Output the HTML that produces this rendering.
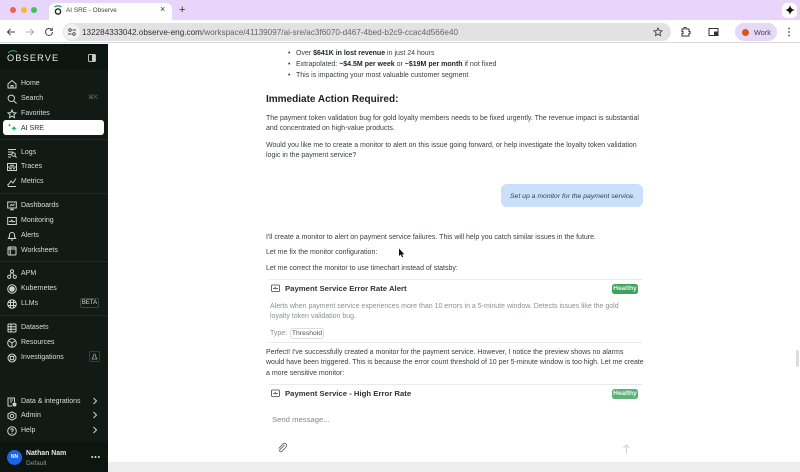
<!DOCTYPE html>
<html><head><meta charset="utf-8"><style>
html,body{margin:0;padding:0;width:800px;height:472px;overflow:hidden;background:#fff}
body{position:relative;font-family:"Liberation Sans",sans-serif;color:#2a2d30}
.a{position:absolute;white-space:nowrap}
.t{position:absolute;white-space:nowrap;font-size:7px;line-height:10px;color:#3a3d40;margin-top:.8px}
.n{position:absolute;left:21px;white-space:nowrap;font-size:7px;line-height:10px;color:#d8dedb;margin-top:1px}
.i{position:absolute;left:7px;width:10px;height:10px;overflow:visible;fill:none;stroke:#cfd6d2;stroke-width:1;margin-top:1px}
b{color:#1e2022}
</style></head><body>
<!-- Chrome top -->
<div class="a" style="left:0;top:0;width:800px;height:20px;background:#e8d5fb"></div>
<div class="a" style="left:0;top:20px;width:800px;height:22px;background:#fff"></div>
<div class="a" style="left:10px;top:6.500px;width:6px;height:6px;border-radius:50%;background:#ee5f5a"></div>
<div class="a" style="left:21px;top:6.500px;width:6px;height:6px;border-radius:50%;background:#f5b83d"></div>
<div class="a" style="left:31px;top:6.500px;width:6px;height:6px;border-radius:50%;background:#3ec554"></div>
<div class="a" style="left:49px;top:3px;width:123px;height:18px;background:#fff;border-radius:6px 6px 0 0"></div>
<svg class="a" style="left:52px;top:4px" width="12" height="12" viewBox="0 0 12 12" fill="none"><path d="M2.500 3Q6 .5 9.500 3" stroke="#1d8f5a" stroke-width="1.200"/><circle cx="6" cy="7.500" r="2.600" stroke="#222" stroke-width="1.400"/></svg>
<div class="a" style="left:66px;top:4.500px;font-size:6.400px;line-height:11px;color:#444">AI SRE - Observe</div>
<div class="a" style="left:160px;top:3px;font-size:9px;line-height:13px;color:#333">×</div>
<div class="a" style="left:179px;top:2.500px;font-size:11px;line-height:15px;color:#333">+</div>
<div class="a" style="left:782px;top:3px;width:15px;height:15px;border-radius:5px;background:#fff"></div>
<svg class="a" style="left:785px;top:5px" width="10" height="10" viewBox="0 0 10 10"><path d="M5 0Q5.600 4.400 10 5Q5.600 5.600 5 10Q4.400 5.600 0 5Q4.400 4.400 5 0Z" fill="#111"/></svg>
<!-- Toolbar -->
<svg class="a" style="left:6px;top:27px" width="10" height="10" viewBox="0 0 10 10" fill="none" stroke="#444" stroke-width="1"><path d="M9 5H1.500M4.500 2 1.500 5l3 3"/></svg>
<svg class="a" style="left:25px;top:27px" width="10" height="10" viewBox="0 0 10 10" fill="none" stroke="#aaa" stroke-width="1"><path d="M1 5h7.500M5.500 2l3 3-3 3"/></svg>
<svg class="a" style="left:44px;top:27px" width="10" height="10" viewBox="0 0 10 10" fill="none" stroke="#444" stroke-width="1"><path d="M8.500 5A3.500 3.500 0 1 1 7.500 2.500M8.300 .8v2.400H5.900"/></svg>
<div class="a" style="left:63px;top:23px;width:608px;height:18px;border-radius:9px;background:#e2e2e4"></div>
<div class="a" style="left:64px;top:24px;width:16px;height:16px;border-radius:50%;background:#f2f2f3"></div>
<svg class="a" style="left:67px;top:27px" width="10" height="10" viewBox="0 0 10 10" fill="none" stroke="#444" stroke-width=".9"><circle cx="3" cy="3" r="1.300"/><path d="M5.500 3H9M1 7h3.500"/><circle cx="7" cy="7" r="1.300"/></svg>
<div class="a" style="left:82px;top:26.500px;font-size:8.180px;line-height:12px;color:#333">132284333042.observe-eng.com<span style="color:#666">/workspace/41139097/ai-sre/ac3f6070-d467-4bed-b2c9-ccac4d566e40</span></div>
<svg class="a" style="left:653px;top:27px" width="10" height="10" viewBox="0 0 10 10" fill="none" stroke="#444" stroke-width=".9"><path d="M5 1l1.200 2.600 2.800.3-2.100 1.900.6 2.800L5 7.200 2.500 8.600l.6-2.800L1 3.900l2.800-.3z"/></svg>
<svg class="a" style="left:680px;top:26px" width="11" height="11" viewBox="0 0 11 11" fill="none" stroke="#333" stroke-width="1"><path d="M2 3h2V1.500h2V3h3v2.500h1v2H9V10H2V7.500h1v-2H2z"/></svg>
<svg class="a" style="left:708px;top:27px" width="11" height="10" viewBox="0 0 11 10" fill="none" stroke="#333" stroke-width="1"><path d="M6 8.500H1V1.500h9v3"/><rect x="6.500" y="5" width="3.500" height="3.500" fill="#333"/></svg>
<div class="a" style="left:735px;top:23px;width:42px;height:18px;border-radius:9px;background:#e6d8f7"></div>
<div class="a" style="left:742px;top:29px;width:7px;height:7px;border-radius:50%;background:#d9541e"></div>
<div class="a" style="left:754px;top:26.500px;font-size:7.300px;line-height:12px;color:#444">Work</div>
<svg class="a" style="left:787px;top:27px" width="4" height="10" viewBox="0 0 4 10" fill="#444"><circle cx="2" cy="1.500" r=".9"/><circle cx="2" cy="5" r=".9"/><circle cx="2" cy="8.500" r=".9"/></svg>
<div class="a" style="left:0;top:42px;width:800px;height:1px;background:#d9d9d9"></div>

<!-- Sidebar -->
<div class="a" style="left:0;top:44px;width:108px;height:428px;background:#111a15"></div>
<div class="a" style="left:0;top:44px;width:108px;height:25px;background:#0c1510"></div>
<div class="a" style="left:0;top:442px;width:108px;height:30px;background:#0c1510"></div>
<svg class="a" style="left:7px;top:49px" width="12" height="5" viewBox="0 0 12 5" fill="none"><path d="M1 4Q5 0 10 3" stroke="#1fa06a" stroke-width="1.100"/></svg>
<div class="a" style="left:7px;top:52px;font-size:9.200px;line-height:12px;letter-spacing:1.150px;color:#e6ebe8">OBSERVE</div>
<svg class="a" style="left:88px;top:54px" width="8" height="8" viewBox="0 0 8 8"><rect x=".5" y=".5" width="7" height="7" rx="1" fill="none" stroke="#bbb"/><rect x="4" y="1" width="3" height="6" fill="#ccc"/></svg>
<div class="a" style="left:3px;top:120px;width:101px;height:15px;border-radius:3px;background:#fff"></div>
<div class="a" style="left:0;top:139px;width:108px;height:1px;background:#202a25"></div>
<div class="a" style="left:0;top:193px;width:108px;height:1px;background:#202a25"></div>
<div class="a" style="left:0;top:261px;width:108px;height:1px;background:#202a25"></div>
<div class="a" style="left:0;top:315px;width:108px;height:1px;background:#202a25"></div>

<svg class="i" style="top:78px" viewBox="0 0 10 10"><path d="M1 5 5 1.500 9 5v4H1zM4 9V6.500h2V9"/></svg><div class="n" style="top:78px">Home</div>
<svg class="i" style="top:93px" viewBox="0 0 10 10"><circle cx="4.300" cy="4.300" r="3.200"/><path d="M6.800 6.800 9.500 9.500"/></svg><div class="n" style="top:93px">Search</div>
<div class="a" style="left:88px;top:94px;font-size:6px;line-height:9px;color:#66706b">⌘K</div>
<svg class="i" style="top:108px" viewBox="0 0 10 10"><path d="M5 1l1.200 2.600 2.800.3-2.100 1.900.6 2.800L5 7.200 2.500 8.600l.6-2.800L1 3.900l2.800-.3z"/></svg><div class="n" style="top:108px">Favorites</div>
<svg class="a" style="left:7px;top:122px" width="11" height="11" viewBox="0 0 11 11"><path d="M7 3.500Q7.300 6 10 6.300 7.300 6.600 7 9.500 6.700 6.600 4 6.300 6.700 6 7 3.500Z" fill="#17b26a"/><path d="M2.500 1.500Q2.700 3 4 3.200 2.700 3.400 2.500 5 2.300 3.400 1 3.200 2.300 3 2.500 1.500Z" fill="#17b26a"/></svg>
<div class="n" style="top:122.500px;color:#26302b">AI SRE</div>
<svg class="i" style="top:146.500px" viewBox="0 0 10 10"><path d="M1 1.500h8M1 4h5M1 6.500h3M1 9h3"/><circle cx="6.500" cy="6.500" r="1.800"/><path d="M8 8l1.500 1.500"/></svg><div class="n" style="top:146.500px">Logs</div>
<svg class="i" style="top:161px" viewBox="0 0 10 10"><rect x=".5" y="1.500" width="9" height="7"/><path d="M.5 5h9M3 3.200h4M2 6.800h3M6 6.800h2"/></svg><div class="n" style="top:161px">Traces</div>
<svg class="i" style="top:176px" viewBox="0 0 10 10"><path d="M1 9.500h8M1.500 7.500 4 4l2 2 3-4.500M1 9V7"/></svg><div class="n" style="top:176px">Metrics</div>
<svg class="i" style="top:200px" viewBox="0 0 10 10"><rect x=".7" y="1" width="8.600" height="6"/><path d="M3 8.800h4M5 7v1.800M3 5l1.500-1.500L6 4.500l1.500-1.500"/></svg><div class="n" style="top:200px">Dashboards</div>
<svg class="i" style="top:215px" viewBox="0 0 10 10"><rect x=".7" y="1.500" width="8.600" height="7"/><path d="M2 5.500h1.800l1-1.500 1 2 .7-.5H8"/></svg><div class="n" style="top:215px">Monitoring</div>
<svg class="i" style="top:230px" viewBox="0 0 10 10"><path d="M1.500 7.500C2.500 6.500 2.500 6 2.500 4a2.500 2.500 0 0 1 5 0c0 2 0 2.500 1 3.500zM4 9h2"/></svg><div class="n" style="top:230px">Alerts</div>
<svg class="i" style="top:245px" viewBox="0 0 10 10"><rect x="1" y="1" width="8" height="8" rx="1"/><path d="M3.200 1v8M1 3h8"/></svg><div class="n" style="top:245px">Worksheets</div>
<svg class="i" style="top:268px" viewBox="0 0 10 10"><circle cx="5" cy="2.300" r="1.600"/><circle cx="2.200" cy="7.800" r="1.600"/><circle cx="7.800" cy="7.800" r="1.600"/><path d="M4.300 3.800 3 6.300M5.700 3.800 7 6.300"/></svg><div class="n" style="top:268px">APM</div>
<svg class="i" style="top:283px" viewBox="0 0 10 10"><circle cx="5" cy="5" r="4.300"/><circle cx="5" cy="5" r="2.300" fill="#cfd6d2"/></svg><div class="n" style="top:283px">Kubernetes</div>
<svg class="i" style="top:298px" viewBox="0 0 10 10"><circle cx="5" cy="5" r="4.300"/><path d="M1 3.500h8M1 6.500h8M3.500 1v8M6.500 1v8"/></svg><div class="n" style="top:298px">LLMs</div>
<div class="a" style="left:80px;top:298px;width:17px;height:8px;border:1px solid #3a4540;border-radius:2px;font-size:6px;line-height:8px;text-align:center;color:#d8dedb">BETA</div>
<svg class="i" style="top:322px" viewBox="0 0 10 10"><rect x="1" y="1" width="8" height="8" rx="1"/><path d="M1 3.700h8M1 6.300h8M4 1v8"/></svg><div class="n" style="top:322px">Datasets</div>
<svg class="i" style="top:337px" viewBox="0 0 10 10"><circle cx="5" cy="5" r="4.300"/><path d="M2 3l3 2 3-2M5 5v4"/></svg><div class="n" style="top:337px">Resources</div>
<svg class="i" style="top:352px" viewBox="0 0 10 10"><circle cx="5" cy="5" r="4"/><circle cx="5" cy="5" r="1.800"/><path d="M2 2 3.700 3.700M8 8 6.300 6.300M8 2 6.300 3.700M2 8l1.700-1.700"/></svg><div class="n" style="top:352px">Investigations</div>
<div class="a" style="left:89px;top:351px;width:9px;height:9px;border:1px solid #333e39;border-radius:2px"></div>
<svg class="a" style="left:90.500px;top:352.500px" width="7" height="7" viewBox="0 0 7 7" fill="none" stroke="#aab" stroke-width=".7"><path d="M2.800.8v2L1 6h5L4.200 2.800v-2"/></svg>
<svg class="i" style="top:396px" viewBox="0 0 10 10"><path d="M7.500 5V1H1v8h4"/><path d="M3 3h3M3 5h2"/><circle cx="7.500" cy="7.500" r="1.500" fill="#cfd6d2"/></svg><div class="n" style="top:395.500px">Data &amp; integrations</div>
<svg class="i" style="top:410px" viewBox="0 0 10 10"><path d="M5 .8 9 3v4L5 9.200 1 7V3z"/><circle cx="5" cy="5" r="1.700"/></svg><div class="n" style="top:410px">Admin</div>
<svg class="i" style="top:425px" viewBox="0 0 10 10"><circle cx="5" cy="5" r="4.300"/><path d="M3.700 4Q3.800 2.700 5 2.700 6.300 2.800 6.300 3.900 6.300 4.700 5 5.300V6.200M5 7v.8"/></svg><div class="n" style="top:425px">Help</div>
<svg class="a" style="left:92px;top:397px" width="6" height="8" viewBox="0 0 6 8" fill="none" stroke="#cfd6d2"><path d="M1.500 1l3 3-3 3"/></svg>
<svg class="a" style="left:92px;top:411px" width="6" height="8" viewBox="0 0 6 8" fill="none" stroke="#cfd6d2"><path d="M1.500 1l3 3-3 3"/></svg>
<svg class="a" style="left:92px;top:426px" width="6" height="8" viewBox="0 0 6 8" fill="none" stroke="#cfd6d2"><path d="M1.500 1l3 3-3 3"/></svg>
<div class="a" style="left:7px;top:450px;width:15px;height:15px;border-radius:50%;background:#1a63ea;color:#fff;font-size:5px;font-weight:bold;line-height:15px;text-align:center">NN</div>
<div class="a" style="left:26px;top:449px;font-size:6.900px;font-weight:bold;line-height:10px;color:#e4e8e6">Nathan Nam</div>
<div class="a" style="left:26px;top:458.500px;font-size:6.500px;line-height:10px;color:#8c9591">Default</div>
<svg class="a" style="left:91px;top:455px" width="9" height="4" viewBox="0 0 9 4" fill="#dde"><circle cx="1.200" cy="2" r="1"/><circle cx="4.500" cy="2" r="1"/><circle cx="7.800" cy="2" r="1"/></svg>

<!-- Main -->
<div class="t" style="left:288px;top:48.500px">•</div>
<div class="t" style="left:296px;top:48.500px">Over <b>$641K in lost revenue</b> in just 24 hours</div>
<div class="t" style="left:288px;top:59px">•</div>
<div class="t" style="left:296px;top:59px">Extrapolated: <b>~$4.5M per week</b> or <b>~$19M per month</b> if not fixed</div>
<div class="t" style="left:288px;top:70px">•</div>
<div class="t" style="left:296px;top:70px">This is impacting your most valuable customer segment</div>
<div class="a" style="left:266px;top:92.500px;font-size:10px;font-weight:bold;line-height:14px;color:#1d1f21">Immediate Action Required:</div>
<div class="t" style="left:266px;top:113px">The payment token validation bug for gold loyalty members needs to be fixed urgently. The revenue impact is substantial</div>
<div class="t" style="left:266px;top:123px">and concentrated on high-value products.</div>
<div class="t" style="left:266px;top:140px">Would you like me to create a monitor to alert on this issue going forward, or help investigate the loyalty token validation</div>
<div class="t" style="left:266px;top:150px">logic in the payment service?</div>
<div class="a" style="left:501px;top:184px;width:142px;height:23px;border-radius:6px;background:#c9dffa"></div>
<div class="a" style="left:510px;top:191.500px;font-size:6.830px;font-style:italic;line-height:10px;color:#3a4048">Set up a monitor for the payment service.</div>
<div class="t" style="left:266px;top:232px">I'll create a monitor to alert on payment service failures. This will help you catch similar issues in the future.</div>
<div class="t" style="left:266px;top:247.500px">Let me fix the monitor configuration:</div>
<svg class="a" style="left:398px;top:248px" width="7" height="10" viewBox="0 0 7 10"><path d="M1 .5V8L2.800 6.500 4 9.300 5.200 8.800 4 6.200H6.300z" fill="#111"/></svg>
<div class="t" style="left:266px;top:263px">Let me correct the monitor to use timechart instead of statsby:</div>
<div class="a" style="left:269px;top:279px;width:373px;height:1px;background:#e9e9e9"></div>
<svg class="a" style="left:271px;top:284px" width="9" height="9" viewBox="0 0 9 9" fill="none" stroke="#444" stroke-width=".8"><rect x=".5" y="1" width="8" height="6.500" rx="1"/><path d="M2 4.500h1.500l.7-1 .8 1.500.5-.5H7"/></svg>
<div class="a" style="left:285px;top:283px;font-size:7.750px;font-weight:bold;line-height:12px;color:#333">Payment Service Error Rate Alert</div>
<div class="a" style="left:612px;top:284px;width:26px;height:10px;border-radius:2.500px;background:#3ea35c;color:#eaf7ee;font-size:6.500px;font-weight:bold;line-height:10px;text-align:center">Healthy</div>
<div class="t" style="left:270px;top:301px;color:#8c8f92">Alerts when payment service experiences more than 10 errors in a 5-minute window. Detects issues like the gold</div>
<div class="t" style="left:270px;top:311px;color:#8c8f92">loyalty token validation bug.</div>
<div class="t" style="left:270px;top:328px;color:#8c8f92">Type:</div>
<div class="a" style="left:290px;top:328px;width:32px;height:9px;border:1px solid #ddd;border-radius:3px;font-size:6.800px;line-height:9px;text-align:center;color:#555">Threshold</div>
<div class="a" style="left:269px;top:342px;width:373px;height:1px;background:#e9e9e9"></div>
<div class="t" style="left:266px;top:347px">Perfect! I've successfully created a monitor for the payment service. However, I notice the preview shows no alarms</div>
<div class="t" style="left:266px;top:357px">would have been triggered. This is because the error count threshold of 10 per 5-minute window is too high. Let me create</div>
<div class="t" style="left:266px;top:368px">a more sensitive monitor:</div>
<div class="a" style="left:269px;top:384px;width:373px;height:1px;background:#e9e9e9"></div>
<svg class="a" style="left:271px;top:389px" width="9" height="9" viewBox="0 0 9 9" fill="none" stroke="#444" stroke-width=".8"><rect x=".5" y="1" width="8" height="6.500" rx="1"/><path d="M2 4.500h1.500l.7-1 .8 1.500.5-.5H7"/></svg>
<div class="a" style="left:285px;top:387.500px;font-size:7.750px;font-weight:bold;line-height:12px;color:#333">Payment Service - High Error Rate</div>
<div class="a" style="left:612px;top:388.500px;width:26px;height:10px;border-radius:2.500px;background:#5cb176;color:#eaf7ee;font-size:6.500px;font-weight:bold;line-height:10px;text-align:center">Healthy</div>
<div class="a" style="left:272px;top:414px;font-size:7.700px;line-height:12px;color:#888">Send message...</div>
<svg class="a" style="left:277px;top:443px" width="11" height="11" viewBox="0 0 11 11" fill="none" stroke="#555" stroke-width=".8"><path d="M7.500 2 2.800 6.800a1.300 1.300 0 0 0 1.800 1.800L9.300 3.800A2.200 2.200 0 0 0 6.200 .8L1.700 5.500"/></svg>
<svg class="a" style="left:622px;top:444px" width="9" height="10" viewBox="0 0 9 10" fill="none" stroke="#c8c8c8" stroke-width=".8"><path d="M4.500 9.500V1M1.500 4l3-3 3 3"/></svg>
<div class="a" style="left:796px;top:350px;width:3px;height:17px;border-radius:2px;background:#dcdcdc"></div>
<div class="a" style="left:108px;top:462px;width:692px;height:10px;background:#ededed"></div>
</body></html>
